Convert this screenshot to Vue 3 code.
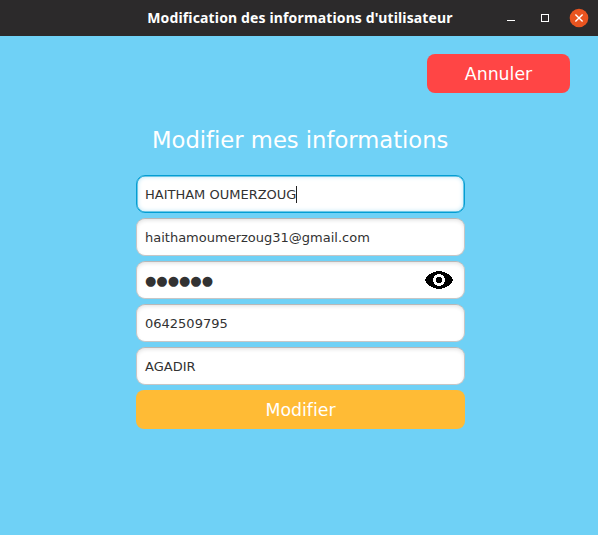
<script setup>
import { ref } from 'vue'

const fields = ref([
  { id: 'name', value: 'HAITHAM OUMERZOUG', focused: true },
  { id: 'email', value: 'haithamoumerzoug31@gmail.com' },
  { id: 'password', value: '●●●●●●', secret: true },
  { id: 'phone', value: '0642509795' },
  { id: 'city', value: 'AGADIR' },
])
</script>

<template>
  <div class="window">
    <header class="titlebar">
      <h1 class="title">Modification des informations d'utilisateur</h1>
      <div class="controls">
        <svg class="control" viewBox="0 0 20 20" shape-rendering="crispEdges">
          <rect x="6" y="12" width="8" height="1" fill="#fff" />
        </svg>
        <svg class="control" viewBox="0 0 20 20" shape-rendering="crispEdges">
          <rect x="6.5" y="6.5" width="7" height="7" fill="none" stroke="#fff" />
        </svg>
        <svg class="control" viewBox="0 0 20 20">
          <circle cx="10" cy="10" r="9.3" fill="#e95420" />
          <path d="M6.4 6.4l7.2 7.2M13.6 6.4l-7.2 7.2" stroke="#fff" stroke-width="1.4" />
        </svg>
      </div>
    </header>
    <main class="content">
      <button class="button cancel">Annuler</button>
      <h2 class="heading">Modifier mes informations</h2>
      <form class="form" @submit.prevent>
        <div
          v-for="field in fields"
          :key="field.id"
          class="field"
          :class="{ focused: field.focused, secret: field.secret }"
        >
          <span class="value">{{ field.value }}</span>
          <span v-if="field.focused" class="caret"></span>
          <svg v-if="field.secret" class="eye" viewBox="0 0 28 18" shape-rendering="crispEdges">
            <path d="M0 9C1.500 4 8 0 14 0s12.500 4 14 9c-1.500 5-8 9-14 9S1.500 14 0 9z" fill="#000" />
            <circle cx="14" cy="9" r="4.500" fill="#000" stroke="#fff" stroke-width="2.800" />
          </svg>
        </div>
        <button class="button submit">Modifier</button>
      </form>
    </main>
  </div>
</template>

<style>
body {
  margin: 0;
  overflow: hidden;
}
</style>

<style scoped>
.window {
  display: flex;
  flex-direction: column;
  height: 535px;
  background: #6fd1f6;
  font-family: "DejaVu Sans", sans-serif;
  font-variant-ligatures: none;
}
.titlebar {
  display: grid;
  grid-template-columns: 1fr auto 1fr;
  align-items: center;
  height: 36px;
  box-sizing: border-box;
  background: #2c2a2b;
  color: #fff;
}
.title {
  grid-column: 2;
  margin: 0;
  padding-left: 2px;
  font: bold 14px/20px "Noto Sans", sans-serif;
  letter-spacing: 0.14px;
  white-space: nowrap;
}
.controls {
  display: flex;
  justify-content: flex-end;
  gap: 14px;
  padding-right: 9px;
}
.control {
  width: 20px;
  height: 20px;
}
.content {
  display: flex;
  flex-direction: column;
  padding: 18px 28px 0 0;
}
.button {
  height: 39px;
  padding: 1px 0 0;
  border: 0;
  border-radius: 8px;
  color: #fff;
  font: 17.33px/38px "DejaVu Sans", sans-serif;
  font-variant-ligatures: none;
}
.cancel {
  align-self: flex-end;
  width: 143px;
  background: #ff4545;
}
.heading {
  margin: 33px 0 0 152px;
  color: #fff;
  font-size: 22.67px;
  font-weight: 400;
  line-height: 28px;
  white-space: nowrap;
}
.form {
  display: flex;
  flex-direction: column;
  gap: 5px;
  width: 329px;
  margin: 21px 0 0 136px;
}
.field {
  display: flex;
  align-items: center;
  height: 38px;
  box-sizing: border-box;
  padding: 1px 11px 0 8px;
  border: 1px solid #c6c6c6;
  border-top-color: #b8b8b8;
  border-radius: 9px;
  background: #fff;
  box-shadow: inset 0 2px 4px -1px #dedede;
  color: #323232;
  font-size: 13px;
  line-height: 17px;
}
.focused {
  border-color: #039ed3;
  box-shadow: inset 0 0 0 0.5px #039ed3, inset 0 0 4px 1px #bfe6f5;
}
.secret {
  padding-top: 0;
}
.caret {
  width: 1px;
  height: 17px;
  background: #222;
}
.eye {
  width: 28px;
  height: 18px;
  margin-left: auto;
}
.submit {
  background: #ffbb35;
}
</style>
